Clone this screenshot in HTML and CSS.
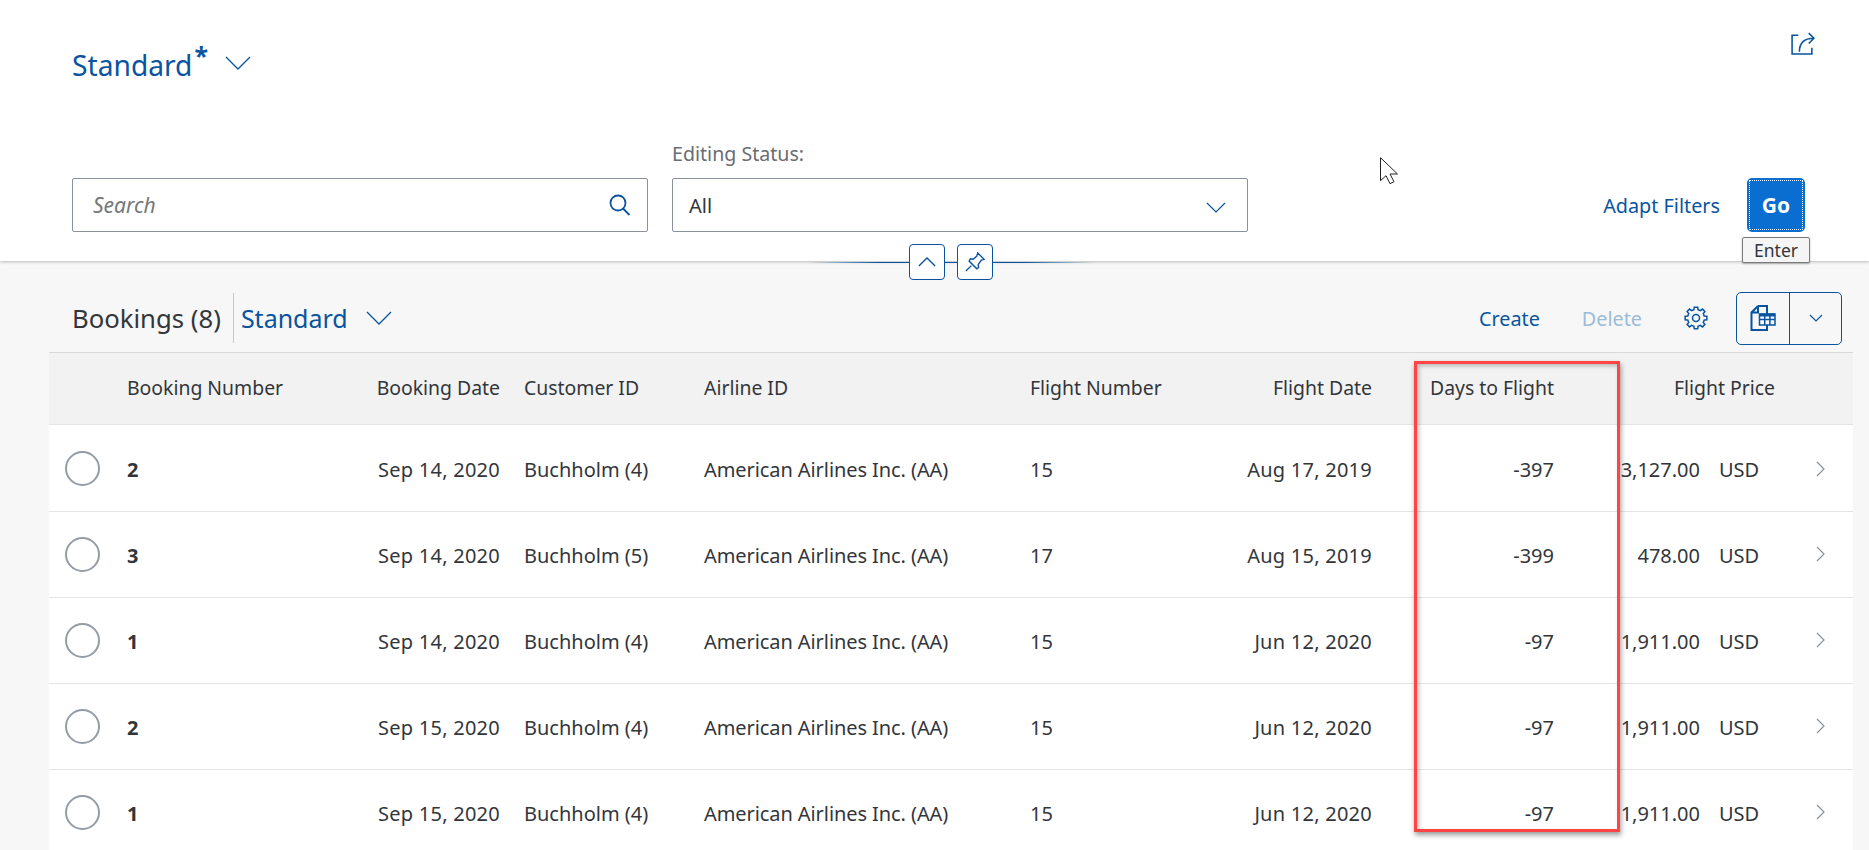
FILE: index.html
```html
<!DOCTYPE html>
<html lang="en">
<head>
  <meta charset="UTF-8">
  <title>Bookings</title>
  <link rel="stylesheet" href="styles.css">
</head>
<body>
  <header class="filter-bar">
    <div class="title-row">
      <div class="variant">
        <span class="variant-name">Standard</span><span class="variant-star">*</span>
        <svg class="variant-arrow" viewBox="0 0 26 14"><path d="M1 1l12 12L25 1"/></svg>
      </div>
      <svg class="share" viewBox="0 0 24 24"><path d="M8 4H2v18h19v-6"/><path d="M9 20C9 12 13 7 23 7M18 2l5 5-5 5"/></svg>
    </div>
    <div class="filter-row">
      <div class="field field-search">
        <div class="input">
          <span class="placeholder">Search</span>
          <svg class="search-icon" viewBox="0 0 22 22"><circle cx="9" cy="9" r="7.500"/><path d="M14 14.500l6.500 6.500"/></svg>
        </div>
      </div>
      <div class="field">
        <label class="field-label">Editing Status:</label>
        <div class="input">
          <span class="value">All</span>
          <svg class="select-arrow" viewBox="0 0 20 11"><path d="M1 1l9 9 9-9"/></svg>
        </div>
      </div>
      <div class="filter-actions">
        <span class="link">Adapt Filters</span>
        <button class="go"><span class="go-inner">Go</span></button>
      </div>
    </div>
    <span class="key-hint">Enter</span>
    <svg class="mouse" viewBox="0 0 18 27"><path d="M.5.700v23l5.500-5 4 8 4-2-4-7.700h7.500z"/></svg>
    <div class="collapse-bar">
      <button class="mini-btn"><svg viewBox="0 0 20 11"><path d="M1 10l9-9 9 9"/></svg></button>
      <button class="mini-btn"><svg class="pin" viewBox="0 0 22 22"><path d="M14 1l7 7-3 1-3.500 5 .5 3-2 1.500-8.500-8.500L6 7.500l3 .5 4-3.500zM7 15l-6 6"/></svg></button>
    </div>
  </header>

  <main class="content">
    <div class="toolbar">
      <span class="table-title">Bookings (8)</span>
      <span class="toolbar-sep"></span>
      <span class="table-variant">Standard</span>
      <svg class="table-variant-arrow" viewBox="0 0 26 14"><path d="M1 1l12 12L25 1"/></svg>
      <div class="toolbar-actions">
        <span class="link action-create">Create</span>
        <span class="link disabled">Delete</span>
        <svg class="gear" viewBox="-12 -12 24 24">
          <polygon points="-2.06,-8.25 -1.72,-10.86 1.72,-10.86 2.06,-8.25 4.38,-7.29 6.46,-8.89 8.89,-6.46 7.29,-4.38 8.25,-2.06 10.86,-1.72 10.86,1.72 8.25,2.06 7.29,4.38 8.89,6.46 6.46,8.89 4.38,7.29 2.06,8.25 1.72,10.86 -1.72,10.86 -2.06,8.25 -4.38,7.29 -6.46,8.89 -8.89,6.46 -7.29,4.38 -8.25,2.06 -10.86,1.72 -10.86,-1.72 -8.25,-2.06 -7.29,-4.38 -8.89,-6.46 -6.46,-8.89 -4.38,-7.29"/>
          <circle r="3.500"/>
        </svg>
        <div class="split-btn">
          <span class="split-main">
            <svg class="export" viewBox="0 0 26 26"><path class="export-page" d="M8 1h9v8M8 1L1.500 7.500V25h15.500v-5M1.500 7.500H8V1"/><path class="export-grid" d="M9.500 9h15.500v11H9.500zM9.500 14.500H25M14.700 10v10M19.900 10v10"/><path class="export-head" d="M9.500 10H25"/></svg>
          </span>
          <span class="split-arrow"><svg viewBox="0 0 14 8"><path d="M1 1l6 6 6-6"/></svg></span>
        </div>
      </div>
    </div>

    <table class="bookings">
      <colgroup>
        <col class="c-select"><col class="c-number"><col class="c-date"><col class="c-customer"><col class="c-airline">
        <col class="c-flight"><col class="c-fdate"><col class="c-days"><col class="c-price"><col class="c-nav">
      </colgroup>
      <thead>
        <tr>
          <th></th><th>Booking Number</th><th class="right">Booking Date</th><th>Customer ID</th><th>Airline ID</th>
          <th>Flight Number</th><th class="right">Flight Date</th><th class="right">Days to Flight</th><th class="right">Flight Price</th><th></th>
        </tr>
      </thead>
      <tbody>
        <tr>
          <td><span class="radio"></span></td><td class="strong">2</td><td class="right date">Sep 14, 2020</td><td>Buchholm (4)</td><td class="airline">American Airlines Inc. (AA)</td>
          <td>15</td><td class="right date">Aug 17, 2019</td><td class="right">-397</td>
          <td><div class="price"><span>3,127.00</span><span class="unit">USD</span></div></td>
          <td><svg class="nav" viewBox="0 0 9 16"><path d="M1 1l7 7-7 7"/></svg></td>
        </tr>
        <tr>
          <td><span class="radio"></span></td><td class="strong">3</td><td class="right date">Sep 14, 2020</td><td>Buchholm (5)</td><td class="airline">American Airlines Inc. (AA)</td>
          <td>17</td><td class="right date">Aug 15, 2019</td><td class="right">-399</td>
          <td><div class="price"><span>478.00</span><span class="unit">USD</span></div></td>
          <td><svg class="nav" viewBox="0 0 9 16"><path d="M1 1l7 7-7 7"/></svg></td>
        </tr>
        <tr>
          <td><span class="radio"></span></td><td class="strong">1</td><td class="right date">Sep 14, 2020</td><td>Buchholm (4)</td><td class="airline">American Airlines Inc. (AA)</td>
          <td>15</td><td class="right date">Jun 12, 2020</td><td class="right">-97</td>
          <td><div class="price"><span>1,911.00</span><span class="unit">USD</span></div></td>
          <td><svg class="nav" viewBox="0 0 9 16"><path d="M1 1l7 7-7 7"/></svg></td>
        </tr>
        <tr>
          <td><span class="radio"></span></td><td class="strong">2</td><td class="right date">Sep 15, 2020</td><td>Buchholm (4)</td><td class="airline">American Airlines Inc. (AA)</td>
          <td>15</td><td class="right date">Jun 12, 2020</td><td class="right">-97</td>
          <td><div class="price"><span>1,911.00</span><span class="unit">USD</span></div></td>
          <td><svg class="nav" viewBox="0 0 9 16"><path d="M1 1l7 7-7 7"/></svg></td>
        </tr>
        <tr>
          <td><span class="radio"></span></td><td class="strong">1</td><td class="right date">Sep 15, 2020</td><td>Buchholm (4)</td><td class="airline">American Airlines Inc. (AA)</td>
          <td>15</td><td class="right date">Jun 12, 2020</td><td class="right">-97</td>
          <td><div class="price"><span>1,911.00</span><span class="unit">USD</span></div></td>
          <td><svg class="nav" viewBox="0 0 9 16"><path d="M1 1l7 7-7 7"/></svg></td>
        </tr>
      </tbody>
    </table>
  </main>

  <div class="highlight"></div>
</body>
</html>
```

FILE: styles.css
```css
html, body { height: 850px; overflow: hidden; }
body { margin: 0; background: #f7f7f7; font-family: "Noto Sans", "Open Sans", sans-serif; font-size: 20px; color: #32363a; position: relative; }
svg { display: block; fill: none; stroke: #0854a0; }
button { font-family: inherit; padding: 0; cursor: pointer; }

.filter-bar { height: 261px; box-sizing: border-box; padding: 0 64px 0 72px; background: #fff; box-shadow: 0 1px 3px rgba(0,0,0,0.25); position: relative; }
.title-row { height: 178px; display: flex; justify-content: space-between; align-items: flex-start; margin-right: -10px; }
.variant { display: flex; align-items: flex-start; padding-top: 44px; color: #0854a0; }
.variant-name { font-size: 28.2px; line-height: 42px; }
.variant-star { font-size: 25px; line-height: 25px; font-weight: 700; margin: -1px 0 0 2px; }
.variant-arrow { width: 26px; height: 14px; margin: 12px 0 0 17px; stroke-width: 1.3; }
.share { width: 25px; height: 25px; margin: 31px 0 0 0; stroke-width: 1.5; }

.filter-row { display: flex; align-items: flex-end; gap: 24px; }
.field { width: 576px; position: relative; }
.field-label { position: absolute; left: 0; top: -37px; color: #6a6d70; line-height: 26px; font-size: 19.6px; white-space: nowrap; }
.input { height: 54px; box-sizing: border-box; border: 1px solid #89919a; border-radius: 2px; display: flex; align-items: center; justify-content: space-between; padding: 0 16px 0 20px; }
.placeholder { font-style: italic; color: #74777a; font-size: 21px; }
.search-icon { width: 22px; height: 22px; stroke-width: 1.8; }
.value { margin-left: -4px; }
.select-arrow { width: 20px; height: 11px; margin-right: 5px; stroke-width: 1.2; margin-top: 4px; }

.filter-actions { margin-left: auto; display: flex; align-items: center; gap: 27px; height: 54px; }
.link { color: #0854a0; white-space: nowrap; font-size: 19.8px; }
.go { width: 58px; height: 54px; box-sizing: border-box; border: 2px solid #0a6ed1; border-radius: 5px; background: #0a6ed1; color: #fff; font-size: 21px; font-weight: 700; }
.go-inner { display: flex; align-items: center; justify-content: center; height: 100%; border: 1px dotted #fff; box-sizing: border-box; }

.key-hint { position: absolute; left: 1742px; top: 237px; width: 68px; height: 26px; box-sizing: border-box; background: #f5f5f5; border: 1px solid #7a7a7a; border-radius: 2px; box-shadow: 0 1px 2px rgba(0,0,0,0.3); font-size: 17.5px; line-height: 24px; text-align: center; z-index: 2; }
.mouse { position: absolute; left: 1380px; top: 157px; width: 18px; height: 27px; stroke: #222; fill: #fff; stroke-width: 1; }

.collapse-bar { position: absolute; left: 808px; top: 244px; width: 286px; height: 36px; display: flex; justify-content: center; gap: 12px; background: linear-gradient(90deg, transparent, #0854a0 25%, #0854a0 75%, transparent) center / 100% 1px no-repeat; }
.mini-btn { width: 36px; height: 36px; background: #fff; border: 1px solid #0854a0; border-radius: 4px; display: flex; align-items: center; justify-content: center; }
.mini-btn svg { width: 18px; height: 10px; stroke-width: 1.5; }
.mini-btn svg.pin { width: 20px; height: 20px; stroke-width: 1.5; }

.content { padding: 0 16px 0 49px; }
.toolbar { height: 91px; box-sizing: border-box; padding: 31px 11px 8px 23px; display: flex; align-items: center; }
.table-title { font-size: 25.7px; white-space: nowrap; }
.toolbar-sep { width: 1px; height: 50px; background: #c6c6c6; margin: 0 7px 0 12px; }
.table-variant { font-size: 25px; color: #0854a0; white-space: nowrap; }
.table-variant-arrow { width: 26px; height: 14px; margin-left: 18px; stroke-width: 1.3; }
.toolbar-actions { margin-left: auto; display: flex; align-items: center; }
.action-create { margin-right: 42px; }
.disabled { color: #9cbbd9; margin-right: 42px; }
.gear { width: 24px; height: 24px; stroke-width: 1.5; margin-right: 28px; }
.split-btn { width: 106px; height: 53px; box-sizing: border-box; border: 1px solid #0854a0; border-radius: 5px; display: flex; }
.split-main { width: 52px; border-right: 1px solid #0854a0; display: flex; align-items: center; justify-content: center; }
.export { width: 26px; height: 26px; }
.export-page { stroke-width: 2; }
.export-grid { stroke-width: 1.5; fill: #fff; }
.export-head { stroke-width: 3; }
.split-arrow { flex: 1; display: flex; align-items: center; justify-content: center; }
.split-arrow svg { width: 14px; height: 8px; stroke-width: 1.2; }

.bookings { width: 1804px; table-layout: fixed; border-collapse: collapse; background: #fff; }
.c-select { width: 66px; }
.c-number { width: 245px; }
.c-date { width: 152px; }
.c-customer { width: 180px; }
.c-airline { width: 326px; }
.c-flight { width: 162px; }
.c-fdate { width: 204px; }
.c-days { width: 182px; }
.c-price { width: 221px; }
.c-nav { width: 66px; }
.bookings th { box-sizing: border-box; height: 72px; padding: 0 12px 3px; background: #f2f2f2; border-top: 1px solid #d9d9d9; border-bottom: 1px solid #e5e5e5; font-size: 19.4px; font-weight: 400; text-align: left; white-space: nowrap; }
.bookings td { box-sizing: border-box; height: 86px; padding: 1px 12px 0; border-bottom: 1px solid #e5e5e5; white-space: nowrap; }
.bookings tbody tr:first-child td { height: 87px; padding-top: 3px; }
.bookings th.right, .bookings td.right { text-align: right; }
.date { letter-spacing: 0.25px; }
.airline { letter-spacing: -0.08px; }
.strong { font-weight: 700; }
.radio { display: block; width: 35px; height: 35px; box-sizing: border-box; border: 2px solid #959ca4; border-radius: 50%; margin: -2px 0 0 4px; }
.price { display: flex; justify-content: flex-end; gap: 19px; }
.unit { width: 56px; }
.nav { width: 9px; height: 16px; stroke: #89919a; stroke-width: 1.2; margin: -2px 0 0 17px; }

.highlight { position: absolute; left: 1414px; top: 361px; width: 206px; height: 471px; box-sizing: border-box; border: 3px solid #ff4444; box-shadow: 1px 3px 5px rgba(0,0,0,0.4), inset 2px 2px 4px rgba(0,0,0,0.25); pointer-events: none; }
```
